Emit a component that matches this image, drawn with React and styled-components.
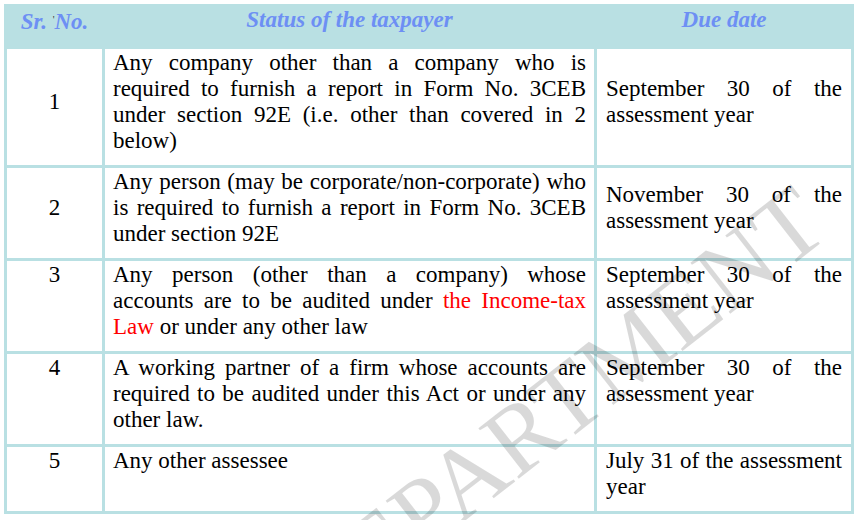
import React from "react";
import styled, { createGlobalStyle } from "styled-components";

const GlobalStyle = createGlobalStyle`
    html, body {
        margin: 0;
        padding: 0;
        background: #ffffff;
    }
    body {
        font-family: "Liberation Serif", "Times New Roman", serif;
        color: #000000;
    }
`;

const Page = styled.div`
    position: relative;
    width: 856px;
    height: 520px;
    padding: 4px;
    box-sizing: border-box;
    overflow: hidden;
`;

const Table = styled.div`
    display: grid;
    grid-template-columns: 95px 489px 254px;
    gap: 3px;
    padding: 3px;
    width: max-content;
    background-color: #b9e0e3;
    font-size: 23px;
    line-height: 26px;
`;

const HeadCell = styled.div`
    padding: 0;
    text-align: center;
    font-weight: 700;
    font-style: italic;
    color: #6d8ff4;
`;

const Cell = styled.div`
    display: flex;
    flex-direction: column;
    justify-content: ${(p) => (p.$middle ? "center" : "flex-start")};
    background-color: #ffffff;
    padding: 1px ${(p) => p.$padRight || "9px"} 0 ${(p) => p.$padLeft || "9px"};
    text-align: ${(p) => p.$align || "justify"};
`;

const Para = styled.p`
    margin: 0 0 11px;
    text-align: inherit;
    text-align-last: ${(p) => (p.$center ? "center" : "left")};
`;

const Tick = styled.span`
    font-size: 10px;
    font-style: normal;
    font-weight: 400;
    color: #333333;
    vertical-align: 6px;
`;

const Red = styled.span`
    color: #ff0000;
`;

// faint diagonal "DEPARTMENT" stamp lying over the table
const Watermark = styled.span`
    position: absolute;
    left: 555px;
    top: 408px;
    transform: translate(-50%, -50%) rotate(-38deg);
    font-size: 99px;
    line-height: 1;
    white-space: nowrap;
    color: rgba(0, 0, 0, 0.15);
    pointer-events: none;
`;

const rows = [
    {
        no: "1",
        status:
            "Any company other than a company who is required to furnish a report in Form No. 3CEB under section 92E (i.e. other than covered in 2 below)",
        due: "September 30 of the assessment year",
        middle: true,
    },
    {
        no: "2",
        status:
            "Any person (may be corporate/non-corporate) who is required to furnish a report in Form No. 3CEB under section 92E",
        due: "November 30 of the assessment year",
        middle: true,
    },
    {
        no: "3",
        status: (
            <>
                Any person (other than a company) whose accounts are to be
                audited under <Red>the Income-tax Law</Red> or under any other
                law
            </>
        ),
        due: "September 30 of the assessment year",
    },
    {
        no: "4",
        status:
            "A working partner of a firm whose accounts are required to be audited under this Act or under any other law.",
        due: "September 30 of the assessment year",
    },
    {
        no: "5",
        status: "Any other assessee",
        due: "July 31 of the assessment year",
    },
];

function App() {
    return (
        <>
            <GlobalStyle />
            <Page>
                <Table>
                    <HeadCell>
                        <Para $center>
                            Sr. <Tick>'</Tick>No.
                        </Para>
                    </HeadCell>
                    <HeadCell>
                        <Para $center>Status of the taxpayer</Para>
                    </HeadCell>
                    <HeadCell>
                        <Para $center>Due date</Para>
                    </HeadCell>

                    {rows.map((row) => (
                        <React.Fragment key={row.no}>
                            <Cell $middle={row.middle} $align="center">
                                <Para $center>{row.no}</Para>
                            </Cell>
                            <Cell $padLeft="8px" $padRight="8px">
                                <Para>{row.status}</Para>
                            </Cell>
                            <Cell $middle={row.middle}>
                                <Para>{row.due}</Para>
                            </Cell>
                        </React.Fragment>
                    ))}
                </Table>
                <Watermark>DEPARTMENT</Watermark>
            </Page>
        </>
    );
}

export default App;
